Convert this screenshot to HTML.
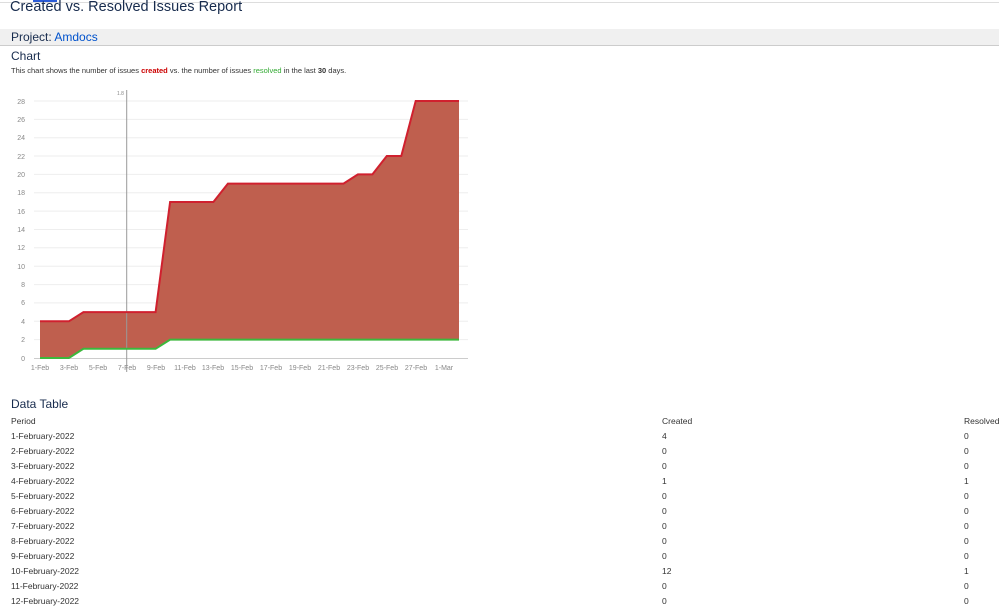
<!DOCTYPE html>
<html><head><meta charset="utf-8"><style>
body{margin:0;width:999px;height:602px;overflow:hidden;background:#fff;font-family:"Liberation Sans",sans-serif;color:#172b4d;position:relative}
.a{position:absolute;white-space:nowrap}
.t{font-size:8.5px;color:#333;line-height:15px}
</style></head><body>
<div class="a" style="left:0;top:2px;width:999px;border-top:1px solid #ddd"></div>
<div class="a" style="left:33px;top:0;width:24px;border-top:2px solid #2a5bd7"></div>
<div class="a" style="left:10px;top:-1px;font-size:14.5px;color:#172b4d">Created vs. Resolved Issues Report</div>
<div class="a" style="left:0;top:29px;width:999px;height:16px;background:#f0f0f0;border-bottom:1px solid #ccc"></div>
<div class="a" style="left:11px;top:30px;font-size:12px">Project: <span style="color:#0052cc">Amdocs</span></div>
<div class="a" style="left:11px;top:49px;font-size:12px">Chart</div>
<div class="a" style="left:11px;top:66px;font-size:7.5px;color:#333">This chart shows the number of issues <b style="color:#c00">created</b> vs. the number of issues <b style="color:#3a3;font-weight:normal">resolved</b> in the last <b>30</b> days.</div>
<svg class="a" style="left:0;top:85px" width="480" height="290" viewBox="0 85 480 290" font-family="Liberation Sans" font-size="7" fill="#888">
<g stroke="#eee" stroke-width="1">
<line x1="34" x2="468" y1="101" y2="101"/><line x1="34" x2="468" y1="119.4" y2="119.4"/><line x1="34" x2="468" y1="137.7" y2="137.7"/><line x1="34" x2="468" y1="156" y2="156"/><line x1="34" x2="468" y1="174.4" y2="174.4"/><line x1="34" x2="468" y1="192.8" y2="192.8"/><line x1="34" x2="468" y1="211.1" y2="211.1"/><line x1="34" x2="468" y1="229.5" y2="229.5"/><line x1="34" x2="468" y1="247.8" y2="247.8"/><line x1="34" x2="468" y1="266.2" y2="266.2"/><line x1="34" x2="468" y1="284.6" y2="284.6"/><line x1="34" x2="468" y1="302.9" y2="302.9"/><line x1="34" x2="468" y1="321.3" y2="321.3"/><line x1="34" x2="468" y1="339.6" y2="339.6"/>
</g>
<line x1="34" x2="468" y1="358.5" y2="358.5" stroke="#ccc"/>
<g text-anchor="end"><text x="25" y="104">28</text><text x="25" y="122">26</text><text x="25" y="140">24</text><text x="25" y="159">22</text><text x="25" y="177">20</text><text x="25" y="195">18</text><text x="25" y="214">16</text><text x="25" y="232">14</text><text x="25" y="250">12</text><text x="25" y="269">10</text><text x="25" y="287">8</text><text x="25" y="305">6</text><text x="25" y="324">4</text><text x="25" y="342">2</text><text x="25" y="361">0</text></g>
<polygon fill="#bf5f4e" points="40,321.3 68.9,321.3 83.4,312.1 155.6,312.1 170.1,202 213.4,202 227.9,183.6 343.5,183.6 357.9,174.4 372.4,174.4 386.8,156 401.3,156 415.7,101 459,101 459,339.6 170.1,339.6 155.6,348.8 83.4,348.8 68.9,358 40,358"/>
<line x1="126.7" x2="126.7" y1="90" y2="372" stroke="#999"/>
<text x="117" y="95" font-size="5">1.8</text>
<polyline fill="none" stroke="#d0202e" stroke-width="2" points="40,321.3 68.9,321.3 83.4,312.1 155.6,312.1 170.1,202 213.4,202 227.9,183.6 343.5,183.6 357.9,174.4 372.4,174.4 386.8,156 401.3,156 415.7,101 459,101"/>
<polyline fill="none" stroke="#3cb83c" stroke-width="2" points="40,358 68.9,358 83.4,348.8 155.6,348.8 170.1,339.6 459,339.6"/>
<g text-anchor="middle"><text x="40" y="370">1-Feb</text><text x="69" y="370">3-Feb</text><text x="98" y="370">5-Feb</text><text x="127" y="370">7-Feb</text><text x="156" y="370">9-Feb</text><text x="185" y="370">11-Feb</text><text x="213" y="370">13-Feb</text><text x="242" y="370">15-Feb</text><text x="271" y="370">17-Feb</text><text x="300" y="370">19-Feb</text><text x="329" y="370">21-Feb</text><text x="358" y="370">23-Feb</text><text x="387" y="370">25-Feb</text><text x="416" y="370">27-Feb</text><text x="444" y="370">1-Mar</text></g>
</svg>
<div class="a" style="left:11px;top:397px;font-size:12px">Data Table</div>
<div class="a t" style="left:11px;top:414px">Period<br>1-February-2022<br>2-February-2022<br>3-February-2022<br>4-February-2022<br>5-February-2022<br>6-February-2022<br>7-February-2022<br>8-February-2022<br>9-February-2022<br>10-February-2022<br>11-February-2022<br>12-February-2022</div>
<div class="a t" style="left:662px;top:414px">Created<br>4<br>0<br>0<br>1<br>0<br>0<br>0<br>0<br>0<br>12<br>0<br>0</div>
<div class="a t" style="left:964px;top:414px">Resolved<br>0<br>0<br>0<br>1<br>0<br>0<br>0<br>0<br>0<br>1<br>0<br>0</div>
</body></html>
